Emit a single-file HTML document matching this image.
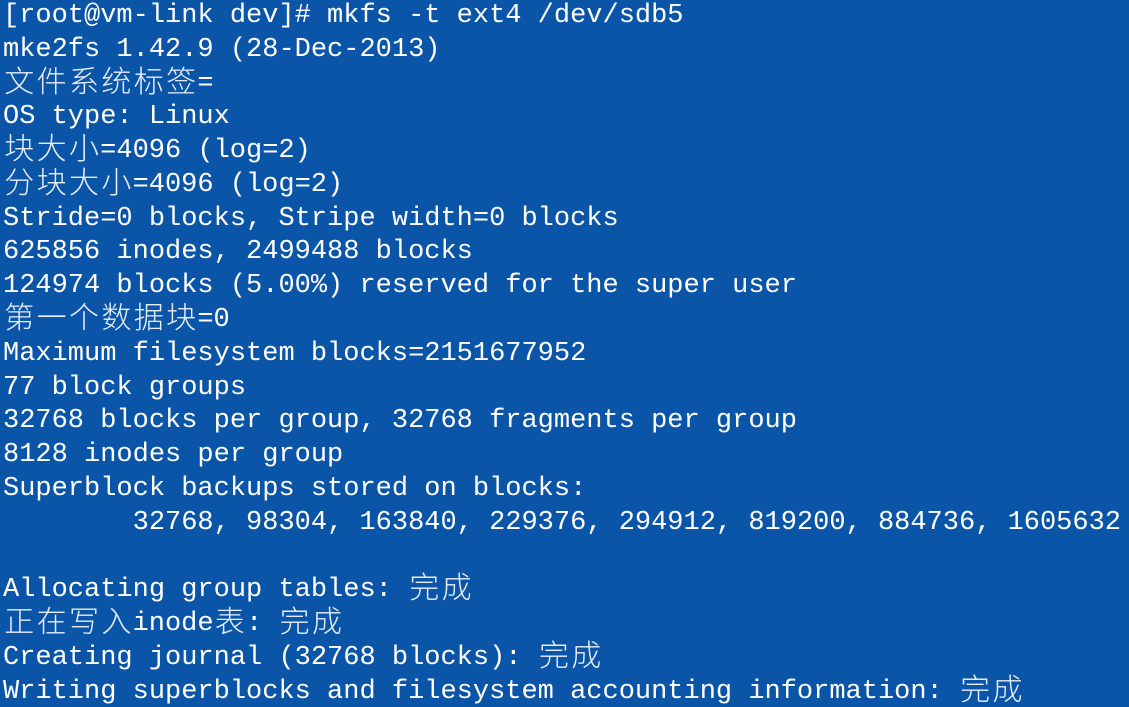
<!DOCTYPE html>
<html><head><meta charset="utf-8"><style>
html,body{margin:0;padding:0;width:1129px;height:707px;overflow:hidden;background:#0a55a8;}
pre{margin:0;padding:0 0 0 3px;position:relative;top:0px;font-family:"Liberation Mono",monospace;font-size:27px;line-height:33.78px;color:#fff;white-space:pre;}
.c{display:inline-block;width:32.4px;text-align:center;font-family:"Noto Sans CJK SC",sans-serif;font-size:30px;font-weight:300;color:#e8eef8;line-height:33.78px;vertical-align:top;position:relative;top:-5px;}
</style></head><body><pre>[root@vm-link dev]# mkfs -t ext4 /dev/sdb5
mke2fs 1.42.9 (28-Dec-2013)
<span class="c">文</span><span class="c">件</span><span class="c">系</span><span class="c">统</span><span class="c">标</span><span class="c">签</span>=
OS type: Linux
<span class="c">块</span><span class="c">大</span><span class="c">小</span>=4096 (log=2)
<span class="c">分</span><span class="c">块</span><span class="c">大</span><span class="c">小</span>=4096 (log=2)
Stride=0 blocks, Stripe width=0 blocks
625856 inodes, 2499488 blocks
124974 blocks (5.00%) reserved for the super user
<span class="c">第</span><span class="c">一</span><span class="c">个</span><span class="c">数</span><span class="c">据</span><span class="c">块</span>=0
Maximum filesystem blocks=2151677952
77 block groups
32768 blocks per group, 32768 fragments per group
8128 inodes per group
Superblock backups stored on blocks:
        32768, 98304, 163840, 229376, 294912, 819200, 884736, 1605632

Allocating group tables: <span class="c">完</span><span class="c">成</span>
<span class="c">正</span><span class="c">在</span><span class="c">写</span><span class="c">入</span>inode<span class="c">表</span>: <span class="c">完</span><span class="c">成</span>
Creating journal (32768 blocks): <span class="c">完</span><span class="c">成</span>
Writing superblocks and filesystem accounting information: <span class="c">完</span><span class="c">成</span>
</pre></body></html>
